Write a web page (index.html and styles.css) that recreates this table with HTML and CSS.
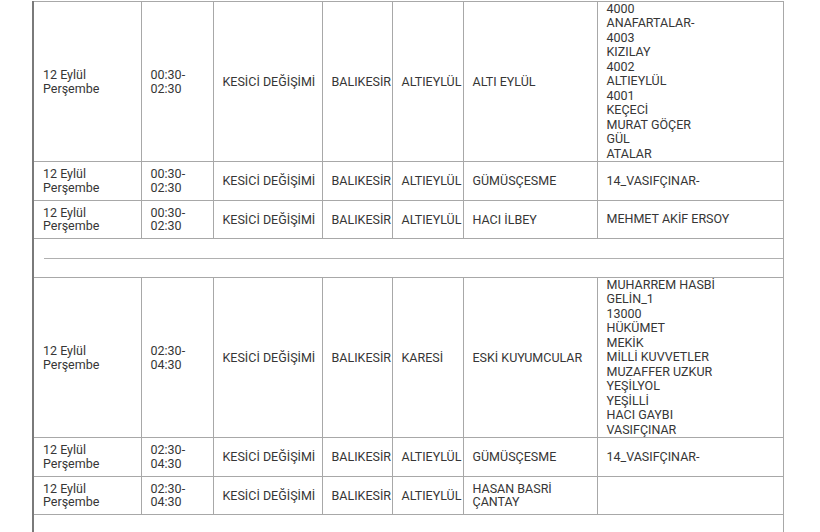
FILE: index.html
```html
<!DOCTYPE html>
<html lang="tr">
<head>
<meta charset="utf-8">
<title>Kesinti Tablosu</title>
<link rel="stylesheet" href="styles.css">
</head>
<body>
<div class="page">
<table class="cuts">
<colgroup>
<col class="c1"><col class="c2"><col class="c3"><col class="c4"><col class="c5"><col class="c6"><col class="c7">
</colgroup>
<tbody>
<tr class="tall">
<td>12 Eylül<br>Perşembe</td>
<td>00:30-<br>02:30</td>
<td class="type">KESİCİ DEĞİŞİMİ</td>
<td>BALIKESİR</td>
<td>ALTIEYLÜL</td>
<td>ALTI EYLÜL</td>
<td class="list">4000<br>ANAFARTALAR-<br>4003<br>KIZILAY<br>4002<br>ALTIEYLÜL<br>4001<br>KEÇECİ<br>MURAT GÖÇER<br>GÜL<br>ATALAR</td>
</tr>
<tr>
<td>12 Eylül<br>Perşembe</td>
<td>00:30-<br>02:30</td>
<td class="type">KESİCİ DEĞİŞİMİ</td>
<td>BALIKESİR</td>
<td>ALTIEYLÜL</td>
<td>GÜMÜSÇESME</td>
<td class="list">14_VASIFÇINAR-</td>
</tr>
<tr>
<td>12 Eylül<br>Perşembe</td>
<td>00:30-<br>02:30</td>
<td class="type">KESİCİ DEĞİŞİMİ</td>
<td>BALIKESİR</td>
<td>ALTIEYLÜL</td>
<td>HACI İLBEY</td>
<td class="list">MEHMET AKİF ERSOY</td>
</tr>
<tr class="sep">
<td colspan="7"><hr></td>
</tr>
<tr class="tall">
<td>12 Eylül<br>Perşembe</td>
<td>02:30-<br>04:30</td>
<td class="type">KESİCİ DEĞİŞİMİ</td>
<td>BALIKESİR</td>
<td>KARESİ</td>
<td>ESKİ KUYUMCULAR</td>
<td class="list">MUHARREM HASBİ<br>GELİN_1<br>13000<br>HÜKÜMET<br>MEKİK<br>MİLLİ KUVVETLER<br>MUZAFFER UZKUR<br>YEŞİLYOL<br>YEŞİLLİ<br>HACI GAYBI<br>VASIFÇINAR</td>
</tr>
<tr>
<td>12 Eylül<br>Perşembe</td>
<td>02:30-<br>04:30</td>
<td class="type">KESİCİ DEĞİŞİMİ</td>
<td>BALIKESİR</td>
<td>ALTIEYLÜL</td>
<td>GÜMÜSÇESME</td>
<td class="list">14_VASIFÇINAR-</td>
</tr>
<tr>
<td>12 Eylül<br>Perşembe</td>
<td>02:30-<br>04:30</td>
<td class="type">KESİCİ DEĞİŞİMİ</td>
<td>BALIKESİR</td>
<td>ALTIEYLÜL</td>
<td>HASAN BASRİ<br>ÇANTAY</td>
<td class="list"></td>
</tr>
<tr class="tail">
<td colspan="7"></td>
</tr>
</tbody>
</table>
</div>
</body>
</html>
```
FILE: styles.css
```css
html, body {
  margin: 0;
  padding: 0;
  background: #ffffff;
}

.page {
  padding: 1px 0 0 32px;
  height: 531px;
  overflow: hidden;
}

.cuts {
  border-collapse: collapse;
  table-layout: fixed;
  width: 751px;
  font-family: Roboto, "Liberation Sans", Arial, sans-serif;
  font-size: 12.5px;
  color: #363636;
  border-left: 2px solid #7a7a7a;
  border-right: 1px solid #9a9a9a;
}

.c1 { width: 108px; }
.c2 { width: 72px; }
.c3 { width: 109px; }
.c4 { width: 70px; }
.c5 { width: 71px; }
.c6 { width: 134px; }
.c7 { width: 186px; }

.cuts td {
  border: 1px solid #a8a8a8;
  padding: 5.25px 9px;
  line-height: 13.5px;
  vertical-align: middle;
  text-align: left;
  white-space: nowrap;
  overflow: visible;
}

.cuts td.list {
  padding: 0 9px;
  line-height: 14.45px;
}

.tall td {
  height: 159px;
  padding-top: 0;
  padding-bottom: 0;
}

.sep td {
  height: 38px;
  padding: 0 0 0 10px;
}

.sep hr {
  margin: 0;
  border: 0;
  border-top: 1px solid #b0b0b0;
  height: 0;
}

.tail td {
  height: 40px;
  padding: 0;
  border-bottom: 0;
}
```
